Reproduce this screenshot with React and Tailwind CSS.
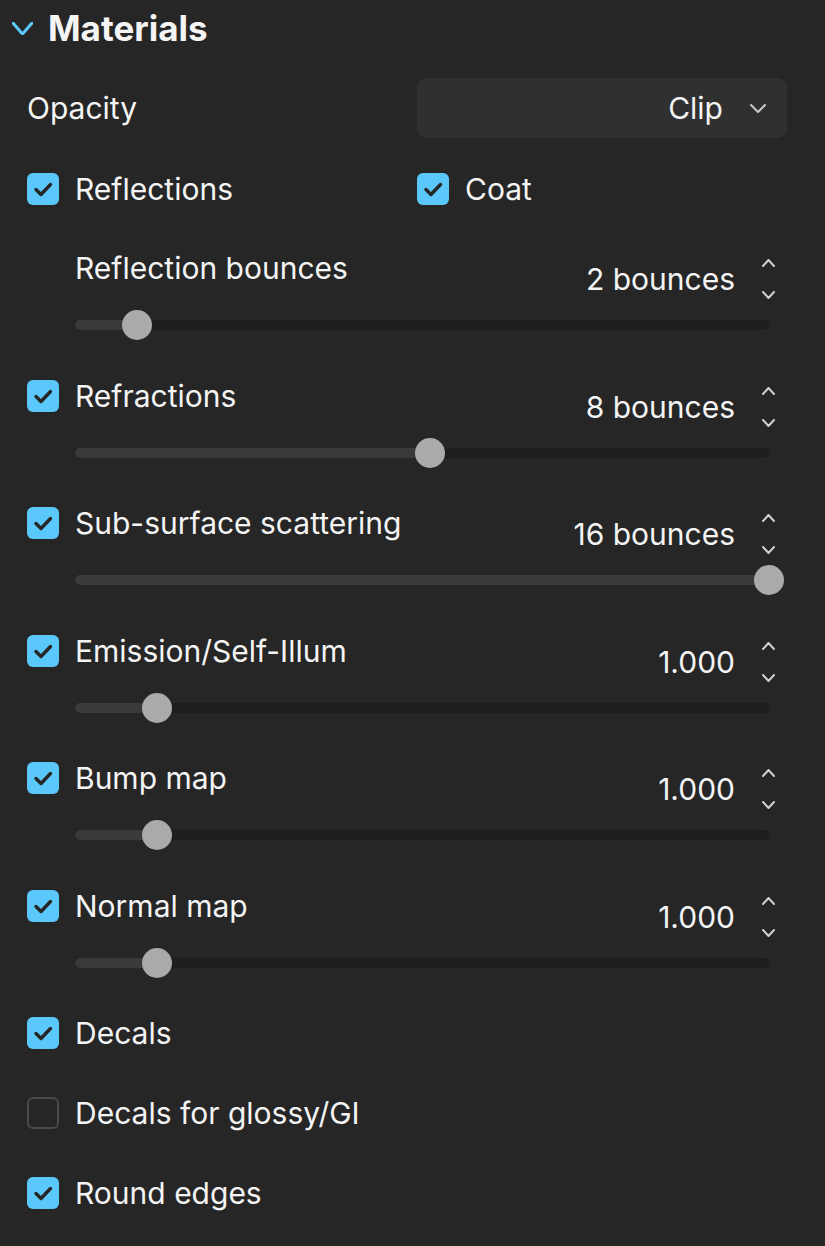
import React from "react";

const FONT = { fontFamily: "Inter, 'Noto Sans', sans-serif" };

function Checkbox({ checked }) {
  if (!checked) {
    return <div className="h-8 w-8 shrink-0 rounded-[6px] border-2 border-[#4a4a4a]" />;
  }
  return (
    <div className="flex h-8 w-8 shrink-0 items-center justify-center rounded-[6px] bg-[#5ac8fa]">
      <svg width="32" height="32" viewBox="0 0 32 32" fill="none">
        <path d="M9 16.5 L14 21.5 L23.5 11.5" stroke="#262626" strokeWidth="3.4" strokeLinecap="round" strokeLinejoin="round" />
      </svg>
    </div>
  );
}

function Chevron({ up, className, w = 13, h = 8, stroke = "#cfcfcf", sw = 2 }) {
  return (
    <svg width={w} height={h} viewBox={`0 0 ${w} ${h}`} fill="none" className={className}>
      <path
        d={up ? `M1 ${h - 1} L${w / 2} 1 L${w - 1} ${h - 1}` : `M1 1 L${w / 2} ${h - 1} L${w - 1} 1`}
        stroke={stroke}
        strokeWidth={sw}
        strokeLinecap="round"
        strokeLinejoin="round"
      />
    </svg>
  );
}

function CheckRow({ label, checked }) {
  return (
    <div className="flex h-8 items-center gap-4">
      <Checkbox checked={checked} />
      <span className="text-[30px] leading-8">{label}</span>
    </div>
  );
}

function SliderRow({ label, value, pos, checked }) {
  return (
    <div className="flex flex-col">
      <div className="flex items-start justify-between">
        <div className="flex h-8 items-center gap-4">
          {checked === undefined ? <div className="w-8" /> : <Checkbox checked={checked} />}
          <span className="text-[30px] leading-8">{label}</span>
        </div>
        <div className="mr-[12px] mt-[5px] flex h-[44px] items-center">
          <span className="text-[30px] leading-8">{value}</span>
          <div className="ml-[26px] flex h-[44px] w-[14px] flex-col items-center justify-between py-[2px]">
            <Chevron up />
            <Chevron />
          </div>
        </div>
      </div>
      <div className="relative ml-[48px] mt-[9px] h-[30px] w-[695px]">
        <div className="absolute left-0 right-0 top-[10px] h-[10px] rounded-full bg-[#1e1e1e]" />
        <div
          className="absolute left-0 top-[10px] h-[10px] rounded-full bg-[#3a3a3a]"
          style={{ width: `${pos}px` }}
        />
        <div
          className="absolute top-0 h-[30px] w-[30px] rounded-full bg-[#aaaaaa]"
          style={{ left: `${pos - 15}px` }}
        />
      </div>
    </div>
  );
}

export default function App() {
  const sliders = [
    { label: "Refractions", value: "8 bounces", pos: 355, checked: true },
    { label: "Sub-surface scattering", value: "16 bounces", pos: 694, checked: true },
    { label: "Emission/Self-Illum", value: "1.000", pos: 82, checked: true },
    { label: "Bump map", value: "1.000", pos: 82, checked: true },
    { label: "Normal map", value: "1.000", pos: 82, checked: true },
  ];

  return (
    <div className="min-h-[1246px] w-[825px] bg-[#262626] text-[#f4f4f4]" style={FONT}>
      <div className="flex h-[56px] items-center pl-[12px]">
        <Chevron w={21} h={13} stroke="#5ac8fa" sw={3} />
        <span className="ml-[15px] text-[35px] font-bold leading-none">Materials</span>
      </div>

      <div className="flex flex-col px-[27px] pr-[38px]">
        <div className="mt-[22px] grid grid-cols-[390px_1fr] items-center">
          <span className="text-[30px] leading-8">Opacity</span>
          <div className="flex h-[60px] items-center justify-end rounded-[9px] bg-[#303030] pr-[21px]">
            <span className="text-[30px] leading-8">Clip</span>
            <Chevron w={16} h={9} stroke="#c8c8c8" className="ml-[27px]" />
          </div>
        </div>

        <div className="mt-[35px] grid grid-cols-[390px_1fr]">
          <CheckRow label="Reflections" checked />
          <CheckRow label="Coat" checked />
        </div>

        <div className="mt-[47px]">
          <SliderRow label="Reflection bounces" value="2 bounces" pos={62} />
        </div>

        {sliders.map((s) => (
          <div key={s.label} className="mt-[39.5px]">
            <SliderRow {...s} />
          </div>
        ))}

        <div className="mt-[39.5px] flex flex-col gap-12">
          <CheckRow label="Decals" checked />
          <CheckRow label="Decals for glossy/GI" checked={false} />
          <CheckRow label="Round edges" checked />
        </div>
      </div>
    </div>
  );
}
